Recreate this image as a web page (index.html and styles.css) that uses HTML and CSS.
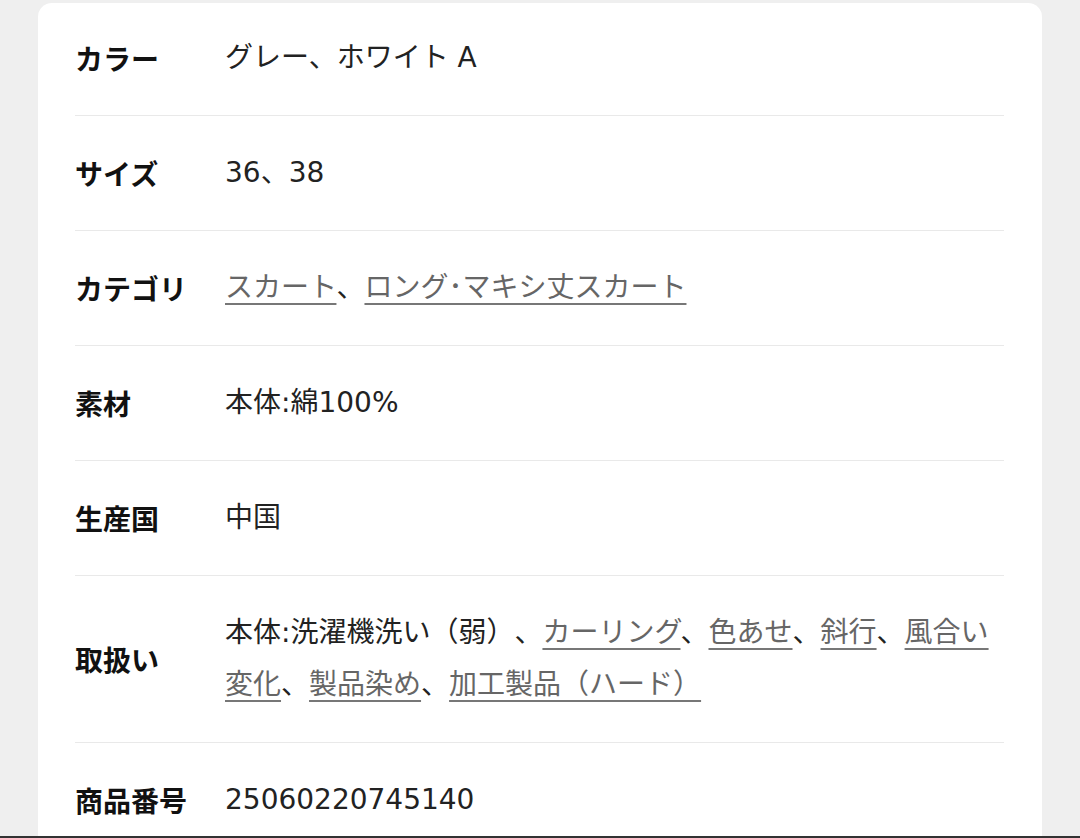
FILE: index.html
```html
<!DOCTYPE html>
<html lang="ja">
<head>
    <meta charset="UTF-8">
    <meta name="viewport" content="width=device-width, initial-scale=1.0">
    <title>商品詳細</title>
    <link rel="stylesheet" href="styles.css">
</head>
<body>
    <div class="spec-card">
        <dl class="spec-list">
            <div class="spec-row">
                <dt>カラー</dt>
                <dd>グレー、ホワイト A</dd>
            </div>
            <div class="spec-row">
                <dt>サイズ</dt>
                <dd>36、38</dd>
            </div>
            <div class="spec-row">
                <dt>カテゴリ</dt>
                <dd><a href="#">スカート</a>、<a href="#">ロング･マキシ丈スカート</a></dd>
            </div>
            <div class="spec-row">
                <dt>素材</dt>
                <dd>本体:綿100%</dd>
            </div>
            <div class="spec-row">
                <dt>生産国</dt>
                <dd>中国</dd>
            </div>
            <div class="spec-row">
                <dt>取扱い</dt>
                <dd>本体:洗濯機洗い（弱）、<a href="#">カーリング</a>、<a href="#">色あせ</a>、<a href="#">斜行</a>、<a href="#">風合い変化</a>、<a href="#">製品染め</a>、<a href="#">加工製品（ハード）</a></dd>
            </div>
            <div class="spec-row">
                <dt>商品番号</dt>
                <dd>25060220745140</dd>
            </div>
        </dl>
    </div>
    <div class="screen-edge"></div>
</body>
</html>
```

FILE: styles.css
```css
body {
    margin: 0;
    background-color: #efefef;
    font-family: "DejaVu Sans", "Noto Sans CJK JP", sans-serif;
    color: #222;
    overflow: hidden;
}
.spec-card {
    margin: 3px 38px 0 38px;
    background-color: #fff;
    border-radius: 14px 14px 0 0;
    padding: 0 38px 0 37px;
    min-height: 900px;
}
.spec-list {
    margin: 0;
}
.spec-row {
    display: flex;
    align-items: center;
    padding: 32px 0;
    border-bottom: 1px solid #e9e9e9;
    font-size: 28px;
    line-height: 50px;
    text-spacing-trim: space-all;
}
.spec-row:first-child {
    padding-top: 30px;
}
.spec-row dt {
    width: 150px;
    flex-shrink: 0;
    font-family: "Noto Sans CJK JP", sans-serif;
    font-weight: bold;
    color: #111;
}
.spec-row dd {
    margin: -1px 0;
    flex: 1;
    line-height: 52px;
    color: #222;
}
.spec-row a {
    color: #666;
    text-decoration: underline;
    text-decoration-color: #777;
    text-decoration-thickness: 2px;
    text-underline-offset: 6px;
}
.screen-edge {
    position: fixed;
    left: 0;
    right: 0;
    bottom: 0;
    height: 2px;
    background-color: #333;
}
```
